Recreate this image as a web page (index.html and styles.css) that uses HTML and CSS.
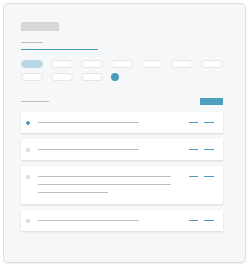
FILE: index.html
```html
<!DOCTYPE html>
<html lang="en">
<head>
  <meta charset="UTF-8">
  <title></title>
  <link rel="stylesheet" href="styles.css">
</head>
<body>
<div class="panel">
  <div class="title"></div>
  <div class="sub"></div>
  <div class="rule"></div>
  <div class="tags">
    <span class="tag on"></span>
    <span class="tag"></span>
    <span class="tag"></span>
    <span class="tag"></span>
    <span class="tag"></span>
    <span class="tag"></span>
    <span class="tag"></span>
    <span class="tag"></span>
    <span class="tag"></span>
    <span class="tag"></span>
    <span class="dot"></span>
  </div>
  <div class="head">
    <span class="head-line"></span>
    <span class="btn"></span>
  </div>
  <ul class="list">
    <li class="item">
      <span class="mark on"></span>
      <div class="lines"><span class="ln"></span></div>
      <div class="acts"><span class="dash"></span><span class="dash w"></span></div>
    </li>
    <li class="item">
      <span class="mark"></span>
      <div class="lines"><span class="ln"></span></div>
      <div class="acts"><span class="dash"></span><span class="dash w"></span></div>
    </li>
    <li class="item">
      <span class="mark"></span>
      <div class="lines tall"><span class="ln long"></span><span class="ln long"></span><span class="ln short"></span></div>
      <div class="acts"><span class="dash"></span><span class="dash w"></span></div>
    </li>
    <li class="item">
      <span class="mark"></span>
      <div class="lines"><span class="ln"></span></div>
      <div class="acts"><span class="dash"></span><span class="dash w"></span></div>
    </li>
  </ul>
</div>
</body>
</html>
```
FILE: styles.css
```css
* {
  padding: 0;
  margin: 0;
  list-style: none;
  box-sizing: border-box;
}

body {
  background: #fff;
  font-family: "Liberation Sans", Arial, sans-serif;
}

.panel {
  width: 243px;
  height: 260px;
  margin: 3px;
  padding: 18px 22px 0 17px;
  background: #f6f7f9;
  border: 1px solid #dedfe1;
  border-radius: 5px;
  box-shadow: 0 1px 1px rgba(0, 0, 0, 0.06);
}

.title {
  width: 38px;
  height: 9px;
  background: #d6d7d7;
}

.sub {
  width: 22px;
  height: 1px;
  margin-top: 11px;
  background: #b9b9b9;
}

.rule {
  width: 77px;
  height: 1px;
  margin-top: 6px;
  background: #4a9bbd;
}

.tags {
  display: flex;
  flex-wrap: wrap;
  gap: 5px 8px;
  margin-top: 10px;
}

.tag {
  width: 22px;
  height: 8px;
  background: #fff;
  border: 1px solid #e4e5e6;
  border-radius: 4px;
}

.tag.on {
  background: #b9d8e3;
  border-color: #b9d8e3;
}

.dot {
  width: 8px;
  height: 8px;
  background: #4a9bbd;
  border-radius: 50%;
}

.head {
  display: flex;
  justify-content: space-between;
  align-items: center;
  margin-top: 17px;
}

.head-line {
  width: 28px;
  height: 1px;
  background: #bcbcbc;
}

.btn {
  width: 23px;
  height: 7px;
  background: #4e9ebe;
}

.list {
  display: flex;
  flex-direction: column;
  gap: 6px;
  margin-top: 7px;
}

.item {
  display: flex;
  align-items: flex-start;
  padding: 10px 9px 10px 5px;
  background: #fff;
  box-shadow: 0 1px 2px rgba(0, 0, 0, 0.12);
}

.mark {
  width: 4px;
  height: 4px;
  margin: -1.5px 0 -1.5px;
  border: 1px solid #c8c8c8;
  border-radius: 50%;
}

.mark.on {
  background: #4a9bbd;
  border-color: #4a9bbd;
}

.lines {
  display: flex;
  flex-direction: column;
  gap: 7px;
  margin-left: 8px;
  flex: 1;
}

.lines.tall {
  padding-bottom: 1px;
}

.ln {
  display: block;
  width: 101px;
  height: 1px;
  background: #bdbdbd;
}

.ln.long {
  width: 133px;
}

.ln.short {
  width: 70px;
}

.acts {
  display: flex;
  gap: 6px;
}

.dash {
  width: 9px;
  height: 1px;
  background: #4a9bbd;
}

.dash.w {
  width: 10px;
}
```
